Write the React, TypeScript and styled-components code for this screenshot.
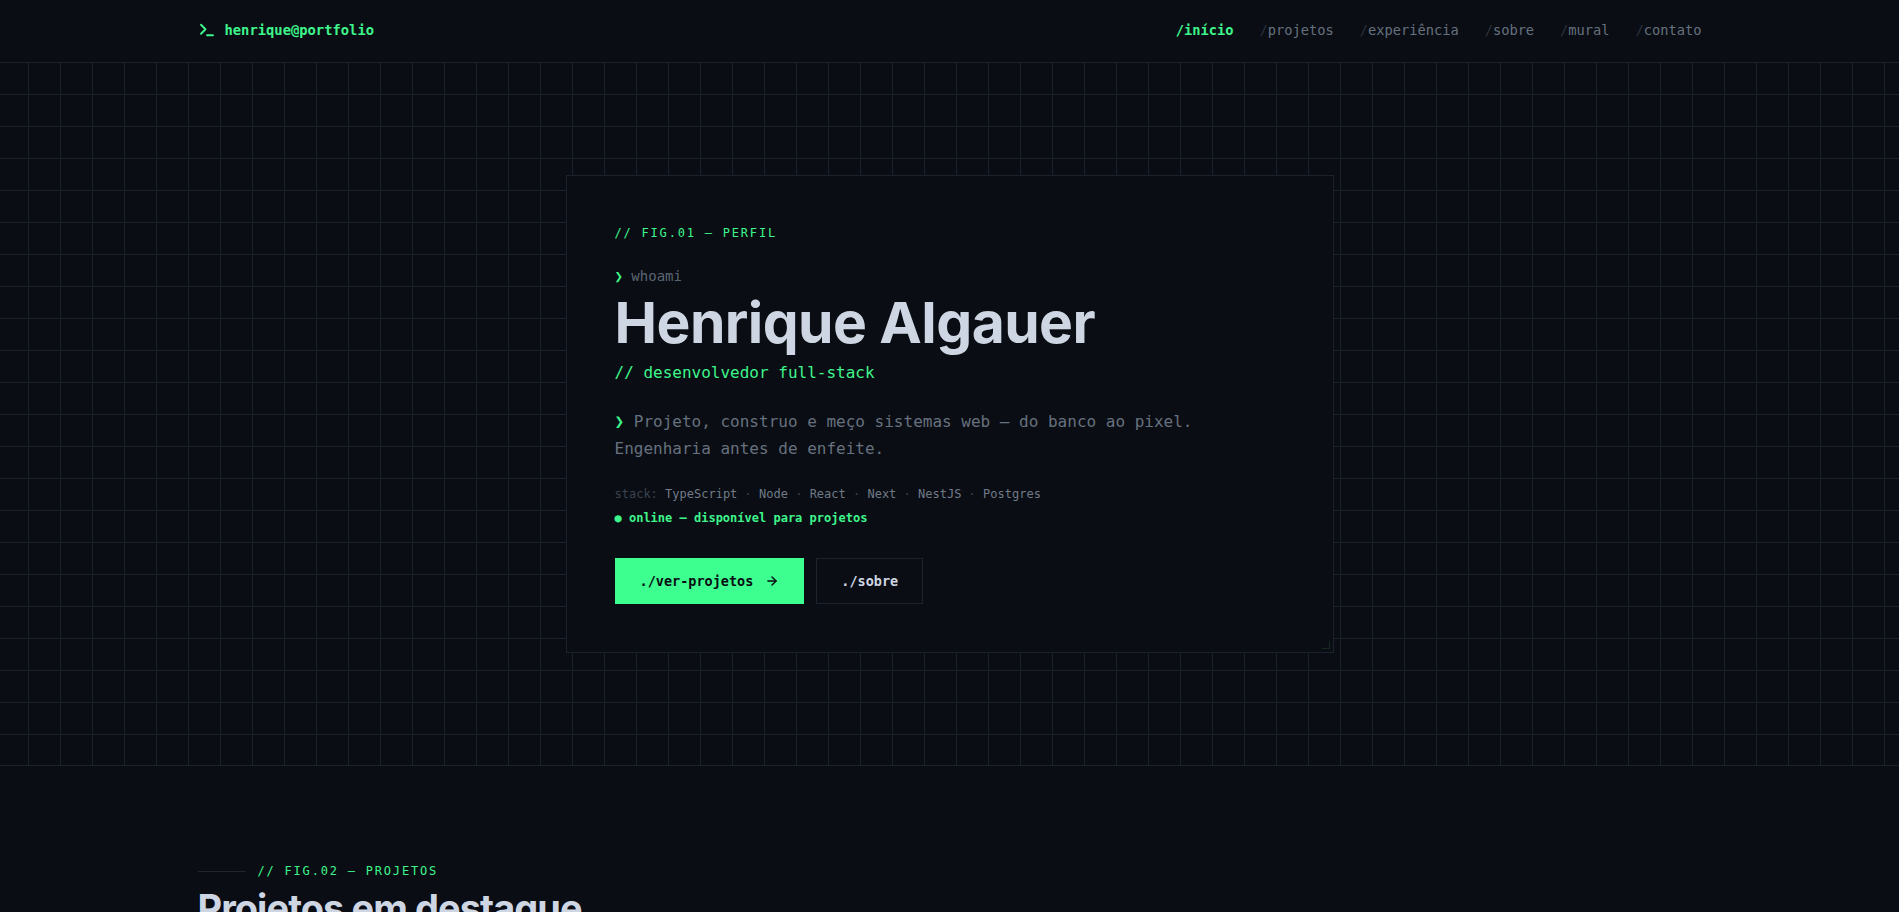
import React from "react"
import styled, { createGlobalStyle } from "styled-components"
import { Terminal, ArrowRight } from "lucide-react"

const GREEN = "#3ef58c"
const MONO = `"DejaVu Sans Mono", "Liberation Mono", monospace`
const SANS = `Inter, "Noto Sans", sans-serif`

const GlobalStyle = createGlobalStyle`
  * { box-sizing: border-box; }
  html, body { margin: 0; padding: 0; }
  body {
    background: #0a0d13;
    color: #cdd6e2;
    font-family: ${MONO};
    overflow: hidden;
  }
`

const navItems = ["início", "projetos", "experiência", "sobre", "mural", "contato"]
const stack = ["TypeScript", "Node", "React", "Next", "NestJS", "Postgres"]

const App = () => {
  return (
    <>
      <GlobalStyle />
      <Header>
        <Bar>
          <Logo>
            <Terminal size={18} strokeWidth={2.5} color={GREEN} />
            <span>henrique@portfolio</span>
          </Logo>
          <Nav>
            {navItems.map((item, i) => (
              <NavLink key={item} $active={i === 0}>
                <Slash $active={i === 0}>/</Slash>
                {item}
              </NavLink>
            ))}
          </Nav>
        </Bar>
      </Header>

      <Hero>
        <Card>
          <Corner />
          <FigLabel>// FIG.01 — PERFIL</FigLabel>
          <Prompt>
            <Chevron>❯</Chevron> whoami
          </Prompt>
          <Name>Henrique Algauer</Name>
          <Role>// desenvolvedor full-stack</Role>
          <Lead>
            <Chevron>❯</Chevron> Projeto, construo e meço sistemas web — do banco ao pixel.
            <br />
            Engenharia antes de enfeite.
          </Lead>
          <Stack>
            <Dim>stack:</Dim>{" "}
            {stack.map((s, i) => (
              <React.Fragment key={s}>
                {i > 0 && <Dim> · </Dim>}
                {s}
              </React.Fragment>
            ))}
          </Stack>
          <Status>● online — disponível para projetos</Status>
          <Actions>
            <Button $primary>
              ./ver-projetos
              <ArrowRight size={14} strokeWidth={2.5} />
            </Button>
            <Button>./sobre</Button>
          </Actions>
        </Card>
      </Hero>

      <Section>
        <SectionInner>
          <SectionLabel>
            <Rule />
            // FIG.02 — PROJETOS
          </SectionLabel>
          <SectionTitle>Projetos em destaque</SectionTitle>
        </SectionInner>
      </Section>
    </>
  )
}

export default App

const Header = styled.header`
  height: 63px;
  border-bottom: 1px solid #1a222c;
  background: #0a0d13;
`

const Bar = styled.div`
  max-width: 1504px;
  height: 100%;
  margin: 0 auto;
  display: flex;
  align-items: center;
  justify-content: space-between;
`

const Logo = styled.div`
  display: flex;
  align-items: center;
  gap: 9px;
  color: ${GREEN};
  font-size: 13.8px;
  font-weight: 700;
  padding-bottom: 2px;
`

const Nav = styled.nav`
  display: flex;
  gap: 26px;
  padding-bottom: 2px;
`

const NavLink = styled.a<{ $active?: boolean }>`
  font-size: 13.7px;
  color: ${(p) => (p.$active ? GREEN : "#66717f")};
  font-weight: ${(p) => (p.$active ? 700 : 400)};
  cursor: pointer;
`

const Slash = styled.span<{ $active?: boolean }>`
  color: ${(p) => (p.$active ? GREEN : "#2a333f")};
`

const Hero = styled.section`
  height: 703px;
  border-bottom: 1px solid #1a222c;
  display: flex;
  justify-content: center;
  padding-top: 112px;
  background-color: #0a0d13;
  background-image: linear-gradient(to right, #19212b 1px, transparent 1px),
    linear-gradient(to bottom, #19212b 1px, transparent 1px);
  background-size: 32px 32px;
  background-position: -4px -1px;
`

const Card = styled.div`
  position: relative;
  width: 768px;
  height: 478px;
  padding: 48px;
  background: #0a0d13;
  border: 1px solid #1a222d;
  display: flex;
  flex-direction: column;
  align-items: flex-start;
`

const Corner = styled.span`
  position: absolute;
  right: 3px;
  bottom: 3px;
  width: 8px;
  height: 8px;
  border-right: 1px solid rgba(62, 245, 140, 0.12);
  border-bottom: 1px solid rgba(62, 245, 140, 0.12);
`

const FigLabel = styled.div`
  font-size: 12px;
  line-height: 18px;
  letter-spacing: 0.15em;
  color: ${GREEN};
`

const Prompt = styled.div`
  margin-top: 24px;
  font-size: 14px;
  line-height: 21px;
  color: #5b6674;
`

const Chevron = styled.span`
  color: ${GREEN};
  font-weight: 700;
`

const Name = styled.h1`
  margin: 8px 0 0;
  font-family: ${SANS};
  font-size: 57px;
  line-height: 56px;
  font-weight: 700;
  letter-spacing: -0.01em;
  color: #cdd6e2;
`

const Role = styled.div`
  margin-top: 10px;
  font-size: 16px;
  line-height: 24px;
  color: ${GREEN};
`

const Lead = styled.p`
  margin: 24px 0 0;
  font-size: 16px;
  line-height: 26.5px;
  color: #66717f;
`

const Stack = styled.div`
  margin-top: 23px;
  font-size: 12px;
  line-height: 18px;
  color: #707b89;
`

const Dim = styled.span`
  color: #3a4350;
`

const Status = styled.div`
  margin-top: 6px;
  font-size: 12px;
  line-height: 18px;
  font-weight: 700;
  color: ${GREEN};
`

const Actions = styled.div`
  margin-top: 31px;
  display: flex;
  gap: 12px;
`

const Button = styled.button<{ $primary?: boolean }>`
  height: 46px;
  padding: 0 24px;
  display: flex;
  align-items: center;
  gap: 12px;
  font-family: ${MONO};
  font-size: 13.5px;
  font-weight: 700;
  cursor: pointer;
  border: 1px solid ${(p) => (p.$primary ? "#3dff8f" : "#1b232e")};
  background: ${(p) => (p.$primary ? "#3dff8f" : "transparent")};
  color: ${(p) => (p.$primary ? "#0a0d13" : "#cdd6e2")};
`

const Section = styled.section`
  padding-top: 96px;
`

const SectionInner = styled.div`
  max-width: 1504px;
  margin: 0 auto;
`

const SectionLabel = styled.div`
  display: flex;
  align-items: center;
  gap: 12px;
  font-size: 12px;
  line-height: 18px;
  letter-spacing: 0.15em;
  color: ${GREEN};
`

const Rule = styled.span`
  width: 48px;
  height: 1px;
  background: #1e2631;
`

const SectionTitle = styled.h2`
  margin: 6px 0 0;
  font-family: ${SANS};
  font-size: 38px;
  line-height: 44px;
  font-weight: 700;
  letter-spacing: -0.025em;
  color: #cdd6e2;
`
